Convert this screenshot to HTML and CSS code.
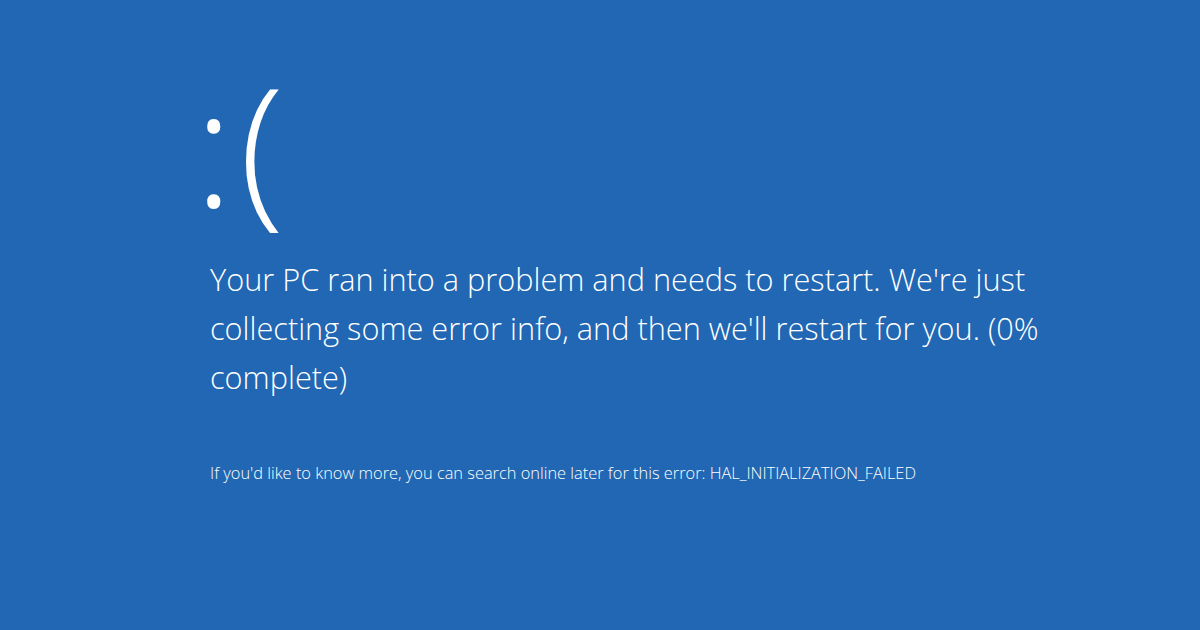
FILE: index.html
```html
<!DOCTYPE html>
<html lang="en">
<head>
    <meta charset="UTF-8">
    <meta name="viewport" content="width=device-width, initial-scale=1.0">
    <title>Your PC ran into a problem</title>
    <link rel="stylesheet" href="styles.css">
</head>
<body>
    <div class="screen">
        <div class="face">:(</div>
        <p class="message">Your PC ran into a problem and needs to restart. We're just collecting some error info, and then we'll restart for you. (0% complete)</p>
        <p class="details">If you'd like to know more, you can search online later for this error: HAL_INITIALIZATION_FAILED</p>
    </div>
</body>
</html>
```

FILE: styles.css
```css
:root {
    --cor_fundo: #2167b3;
    --cor_texto: #ffffff;
}

body {
    margin: 0;
    background-color: var(--cor_fundo);
    color: var(--cor_texto);
    font-family: "Open Sans", "Noto Sans", sans-serif;
    font-weight: 300;
    height: 100vh;
    overflow: hidden;
}

.screen {
    padding: 61px 0 0 210px;
    width: 860px;
}

.face {
    font-size: 165px;
    line-height: 1;
    letter-spacing: 6px;
    height: 194px;
    margin-left: -16px;
}

.message {
    font-size: 30.7px;
    line-height: 49px;
    margin: 0;
}

.details {
    font-size: 16.4px;
    line-height: 22px;
    margin: 60px 0 0 0;
}
```
